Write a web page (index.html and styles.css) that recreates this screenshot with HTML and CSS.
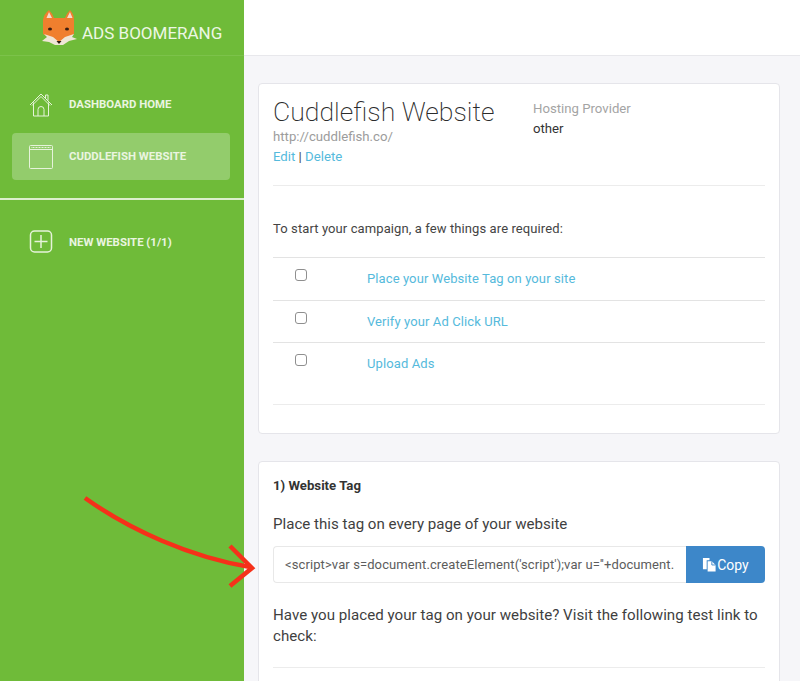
FILE: index.html
```html
<!DOCTYPE html>
<html lang="en">
<head>
<meta charset="utf-8">
<title>Ads Boomerang</title>
<link rel="stylesheet" href="styles.css">
</head>
<body>
<div class="app">
  <aside class="sidebar">
    <div class="brand">
      <svg class="fox" viewBox="0 0 36 36" width="36" height="36">
        <path d="M2 11 Q3 5 8 1 Q11 4 13 9 H24 Q26 4 29 1 Q33 5 33 11 V25 L18 35 L2 25 Z" fill="#f07f2e"/>
        <path d="M8 3 L5.500 9 L11 9 Z M29 3 L26 9 L31.500 9 Z" fill="#f6dccb"/>
        <path d="M1 32 L6 28 L3 25 L12 28 L18 33 L24 28 L33 25 L31 28 L36 30 L28 32 L22 36 H14 L8 33 Z" fill="#efe6d6"/>
        <ellipse cx="9" cy="20" rx="2" ry="1.500" fill="#3a1d10"/>
        <ellipse cx="26" cy="20" rx="2" ry="1.500" fill="#3a1d10"/>
        <path d="M15.500 32 H20.500 L18 35 Z" fill="#2b1a12"/>
      </svg>
      <span class="brand-name">ADS BOOMERANG</span>
    </div>
    <nav class="nav">
      <a class="nav-item">
        <svg class="nav-icon" viewBox="0 0 24 24" width="24" height="24" fill="none" stroke="#e6f3da" stroke-width="1"><path d="M1 12 L12 1 L23 12 M4.500 9.500 V23 H19.500 V9.500 M9 23 V16.500 A3 3 0 0 1 15 16.500 V23 M16.500 5 V2 H19 V7.500 M3 12.500 L12 3.500 L21 12.500"/></svg>
        <span class="nav-label">DASHBOARD HOME</span>
      </a>
      <a class="nav-item active">
        <svg class="nav-icon" viewBox="0 0 24 24" width="24" height="24" fill="none" stroke="#e6f3da" stroke-width="1"><rect x="0.500" y="0.500" width="23" height="23" rx="1"/><path d="M0.500 4.500 H23.500"/><path d="M2.500 2.500 H21.500" stroke-dasharray="1 0.500"/></svg>
        <span class="nav-label">CUDDLEFISH WEBSITE</span>
      </a>
    </nav>
    <div class="nav-divider"></div>
    <nav class="nav nav-lower">
      <a class="nav-item">
        <svg class="nav-icon" viewBox="0 0 24 24" width="24" height="24" fill="none" stroke="#e6f3da" stroke-width="1.500"><rect x="1.500" y="1" width="21" height="21" rx="4"/><path d="M12 5 V18 M5.500 11.500 H18.500"/></svg>
        <span>NEW WEBSITE (1/1)</span>
      </a>
    </nav>
  </aside>
  <div class="content">
    <header class="topbar"></header>
    <main class="main">
      <section class="card card-summary">
        <div class="summary-head">
          <div class="summary-title">
            <h1>Cuddlefish Website</h1>
            <div class="url">http://cuddlefish.co/</div>
            <div class="actions"><a>Edit</a> | <a>Delete</a></div>
          </div>
          <div class="host">
            <div class="host-label">Hosting Provider</div>
            <div class="host-value">other</div>
          </div>
        </div>
        <hr class="rule">
        <p class="intro">To start your campaign, a few things are required:</p>
        <ul class="checklist">
          <li><input type="checkbox" class="check"><a>Place your Website Tag on your site</a></li>
          <li><input type="checkbox" class="check"><a>Verify your Ad Click URL</a></li>
          <li class="last"><input type="checkbox" class="check"><a>Upload Ads</a></li>
        </ul>
      </section>
      <section class="card card-tag">
        <h2>1) Website Tag</h2>
        <p class="lead">Place this tag on every page of your website</p>
        <div class="copy-group">
          <div class="code-field">&lt;script&gt;var s=document.createElement('script');var u=''+document.</div>
          <button class="copy-btn">
            <svg viewBox="0 0 16 16" width="15" height="15"><path d="M1 1 H8 V3.500 H5 V13 H1 Z" fill="#fff"/><path d="M6 4.500 H10.500 L14.500 8.500 V15.500 H6 Z" fill="#fff"/><path d="M10.500 4.500 V8.500 H14.500" fill="none" stroke="#3d87c9" stroke-width="1"/></svg>Copy
          </button>
        </div>
        <p class="lead check-text">Have you placed your tag on your website? Visit the following test link to check:</p>
        <hr class="rule">
      </section>
    </main>
  </div>
  <svg class="arrow" viewBox="0 0 200 120" width="200" height="120" fill="none" stroke="#f5311a" stroke-width="4.500">
    <path d="M5 3 C50 35 110 62 170 72"/>
    <path d="M150 51 L172 73 L150 91"/>
  </svg>
</div>
</body>
</html>
```
FILE: styles.css
```css
* { box-sizing: border-box; }
html, body { margin: 0; height: 681px; overflow: hidden; }
body { font-family: Roboto, "Liberation Sans", sans-serif; color: #333; background: #f6f6f9; }
.app { position: relative; display: flex; height: 681px; overflow: hidden; }

.sidebar { width: 244px; flex: none; background: #6fbb39; color: #e9f5df; }
.brand { height: 56px; padding: 9px 0 0 41px; display: flex; align-items: flex-start; gap: 5px; border-bottom: 1px solid #7cc24a; }
.fox { flex: none; }
.brand-name { font-size: 17px; line-height: 20px; margin-top: 14px; color: #edf7e4; }
.nav { padding: 25px 14px 0 12px; display: flex; flex-direction: column; gap: 5px; }
.nav-item { display: flex; align-items: center; height: 47px; padding-left: 17px; gap: 16px; border-radius: 4px; font-size: 11.400px; font-weight: 700; color: #eaf5e0; }
.nav-item.active { background: #93cc6c; }
.nav-icon { flex: none; }
.nav-label { margin-bottom: 2px; }
.nav-divider { height: 2px; margin-top: 18px; background: #dcefcd; }
.nav-lower { padding-top: 18px; }

.content { flex: 1; min-width: 0; display: flex; flex-direction: column; }
.topbar { height: 56px; flex: none; background: #fff; border-bottom: 1px solid #e8e8ec; }
.main { padding: 27px 20px 0 14px; }
.card { background: #fff; border: 1px solid #e5e5ea; border-radius: 4px; padding: 0 14px; }
.card-summary { height: 351px; }
.card-tag { margin-top: 27px; height: 260px; padding-top: 16px; }

.summary-head { display: flex; height: 101px; padding-top: 12px; }
.summary-title { width: 260px; }
h1 { margin: 0; font-size: 26.600px; font-weight: 200; line-height: 32px; color: #2b2b2b; }
.url { font-size: 13.200px; line-height: 18px; color: #9c9c9c; }
.actions { font-size: 13.200px; line-height: 20px; color: #444; margin-top: 1px; }
a { color: #55badc; }
.host { font-size: 13.200px; line-height: 20px; padding-top: 3px; }
.host-label { color: #a4a4a4; }
.host-value { color: #333; }
.rule { border: 0; border-top: 1px solid #ececec; margin: 0; }
.intro { margin: 34px 0 0; font-size: 13px; line-height: 18px; color: #444; letter-spacing: .1px; }
.checklist { list-style: none; margin: 19px 0 0; padding: 0; border-bottom: 1px solid #ececec; font-size: 13px; }
.checklist li { height: 42.700px; border-top: 1px solid #e3e3e3; padding: 12px 0 0 22px; display: flex; line-height: 18px; letter-spacing: .1px; }
.checklist li.last { height: 61.600px; }
.check { appearance: none; width: 12px; height: 12px; margin: -1px 60px 0 0; border: 1px solid #8f8f8f; border-radius: 3px; background: #fff; flex: none; }

h2 { margin: 0; font-size: 13.200px; font-weight: 700; line-height: 16px; color: #333; }
.lead { margin: 0; font-size: 15.100px; line-height: 21px; color: #3f3f3f; }
.card-tag .lead { margin-top: 20px; }
.copy-group { display: flex; margin-top: 11px; height: 37px; width: 492px; }
.code-field { flex: 1; min-width: 0; border: 1px solid #e8e8e8; border-right: 0; border-radius: 4px 0 0 4px; padding: 0 11px; font-size: 13px; line-height: 35px; color: #5c5c5c; white-space: nowrap; overflow: hidden; letter-spacing: .1px; }
.copy-btn { flex: none; width: 79px; border: 0; background: #3d87c9; color: #fff; border-radius: 0 4px 4px 0; font-family: inherit; font-size: 14px; display: flex; align-items: center; justify-content: center; padding: 0; }
.card-tag .check-text { margin-top: 22px; letter-spacing: .03px; }
.card-tag .rule { margin-top: 20px; width: 492px; }

.arrow { position: absolute; left: 80px; top: 495px; }
```
